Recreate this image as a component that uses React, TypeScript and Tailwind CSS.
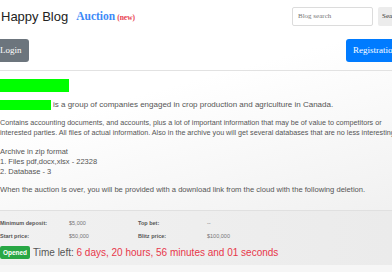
import React from "react";

export default function App() {
  const sans = { fontFamily: '"Liberation Sans", Arial, sans-serif' };
  const serif = { fontFamily: '"Liberation Serif", "Times New Roman", serif' };
  return (
    <div
      className="w-[392px] h-[272px] overflow-hidden bg-[linear-gradient(165deg,#ffffff_35%,#ececec_100%)] text-[#555]"
      style={sans}
    >
      {/* header */}
      <div className="flex items-center h-[33px] pl-[1px]">
        <div className="text-[13px] text-[#222] leading-none">Happy Blog</div>
        <div className="ml-[8px] flex items-baseline" style={serif}>
          <span className="text-[11.5px] font-bold text-[#3d8af7] leading-none">Auction</span>
          <span className="ml-[2px] text-[7.5px] font-bold text-[#e8414f] leading-none">(new)</span>
        </div>
        <div className="ml-auto flex items-center gap-[5px] -mr-[20px]">
          <div
            className="w-[81px] h-[19px] border border-[#dcdcdc] bg-white rounded-[2px] flex items-center pl-[5px] text-[7px] text-[#777]"
            style={serif}
          >
            Blog search
          </div>
          <div
            className="w-[34px] h-[19px] bg-[#ececec] rounded-[2px] flex items-center pl-[4px] text-[7px] text-[#333]"
            style={serif}
          >
            Search
          </div>
        </div>
      </div>
      {/* buttons */}
      <div className="flex items-center mt-[6px] h-[23px]">
        <div
          className="-ml-[7px] h-[23px] px-[7px] bg-[#6c757d] rounded-[3px] text-white text-[9px] flex items-center"
          style={serif}
        >
          Login
        </div>
        <div
          className="ml-auto -mr-[20px] h-[23px] w-[66px] pl-[7px] bg-[#007bff] rounded-[3px] text-white text-[9px] flex items-center"
          style={serif}
        >
          Registration
        </div>
      </div>
      <div className="mt-[8px] border-t border-[#e2e2e2]" />
      {/* body */}
      <div className="mt-[8px] w-[69px] h-[13px] bg-[#00ff00]" />
      <div className="mt-[8px] flex items-center text-[8px] leading-[10px]">
        <div className="w-[51px] h-[10px] bg-[#00ff00]" />
        <span className="ml-[2px] whitespace-nowrap">
          is a group of companies engaged in crop production and agriculture in Canada.
        </span>
      </div>
      <div className="mt-[8px] text-[7.2px] leading-[10px] whitespace-nowrap">
        <div>
          Contains accounting documents, and accounts, plus a lot of important information that may be of value to competitors or
        </div>
        <div>
          interested parties. All files of actual information. Also in the archive you will get several databases that are no less interesting.
        </div>
      </div>
      <div className="mt-[9px] text-[7.5px] leading-[10px] whitespace-nowrap">
        <div>Archive in zip format</div>
        <div>1. Files pdf,docx,xlsx - 22328</div>
        <div>2. Database - 3</div>
      </div>
      <div className="mt-[8px] text-[7.6px] leading-[10px] whitespace-nowrap">
        When the auction is over, you will be provided with a download link from the cloud with the following deletion.
      </div>
      {/* panel */}
      <div className="mt-[15px] border-t border-[#e0e0e0] bg-[linear-gradient(90deg,#f1f1f1,#ebebeb)] h-[55px] pt-[6px]">
        <div className="grid grid-cols-[69px_69px_69px_1fr] text-[5.5px] leading-[13px]">
          <div className="font-bold text-[#555]">Minimum deposit:</div>
          <div className="text-[#777]">$5,000</div>
          <div className="font-bold text-[#555]">Top bet:</div>
          <div className="text-[#777]">--</div>
          <div className="font-bold text-[#555]">Start price:</div>
          <div className="text-[#777]">$50,000</div>
          <div className="font-bold text-[#555]">Blitz price:</div>
          <div className="text-[#777]">$100,000</div>
        </div>
        <div className="mt-[3px] flex items-center">
          <div className="h-[13px] w-[30px] bg-[#28a745] rounded-[2px] text-white text-[6.5px] font-bold flex items-center justify-center">
            Opened
          </div>
          <span className="ml-[3px] text-[10px] text-[#555] leading-none whitespace-nowrap">
            Time left: <span className="text-[#e8364a]">6 days, 20 hours, 56 minutes and 01 seconds</span>
          </span>
        </div>
      </div>
      <div className="h-[10px] bg-[#f6f6f6]" />
    </div>
  );
}
